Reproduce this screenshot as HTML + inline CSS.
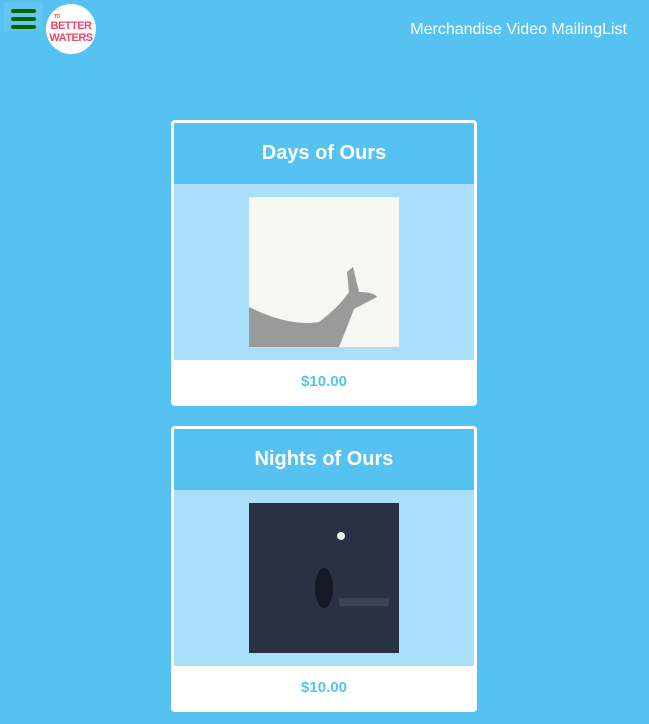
<!DOCTYPE html>
<html><head><style>
body{margin:0;width:649px;height:724px;background:#55c2f2;font-family:"Liberation Sans",sans-serif;position:relative;overflow:hidden}
.hb{position:absolute;left:4px;top:2px;width:39px;height:29px;background:#62c6f0}
.hb i{position:absolute;left:7px;width:25px;height:4px;border-radius:2px;background:#006400}
.logo{position:absolute;left:46px;top:4px;width:50px;height:50px;border-radius:50%;background:#fff;color:#e8496a;font-weight:bold;text-align:center;line-height:12px;font-size:11px;letter-spacing:-0.5px}
.nav{position:absolute;right:22px;top:21px;color:#fff;font-size:16px}
.card{position:absolute;left:171px;width:300px;border:3px solid #fff;border-radius:4px;overflow:hidden}
.h{height:61px;background:#55c2f2;color:#fff;font-weight:bold;font-size:20px;text-align:center;line-height:61px}
.b{height:176px;background:#aadff9;position:relative}
.img{position:absolute;left:75px;top:13px;width:150px;height:150px}
.f{height:43px;background:#fff;color:#55c2f2;font-weight:bold;font-size:15px;text-align:center;line-height:43px}
</style></head><body>
<div class="hb"><i style="top:7px"></i><i style="top:15px"></i><i style="top:23px"></i></div>
<div class="logo"><div style="font-size:5px;line-height:6px;margin-top:10px;text-align:left;padding-left:8px">TO</div>BETTER<br>WATERS</div>
<div class="nav">Merchandise Video MailingList</div>
<div class="card" style="top:120px"><div class="h">Days of Ours</div><div class="b"><div class="img" style="background:#f6f6f2">
<svg width="150" height="150"><path d="M0 110 Q40 130 70 125 Q90 110 100 95 L98 75 L104 70 L110 95 Q125 95 128 100 L105 112 L100 125 L90 150 L0 150Z" fill="#9a9a9a"/></svg></div></div><div class="f">$10.00</div></div>
<div class="card" style="top:426px"><div class="h">Nights of Ours</div><div class="b"><div class="img" style="background:#2a3142">
<svg width="150" height="150"><circle cx="92" cy="33" r="4" fill="#e8f0e8"/><ellipse cx="75" cy="85" rx="9" ry="20" fill="#151a26"/><rect x="90" y="95" width="50" height="8" fill="#4a5468" opacity=".6"/></svg></div></div><div class="f">$10.00</div></div>
</body></html>
